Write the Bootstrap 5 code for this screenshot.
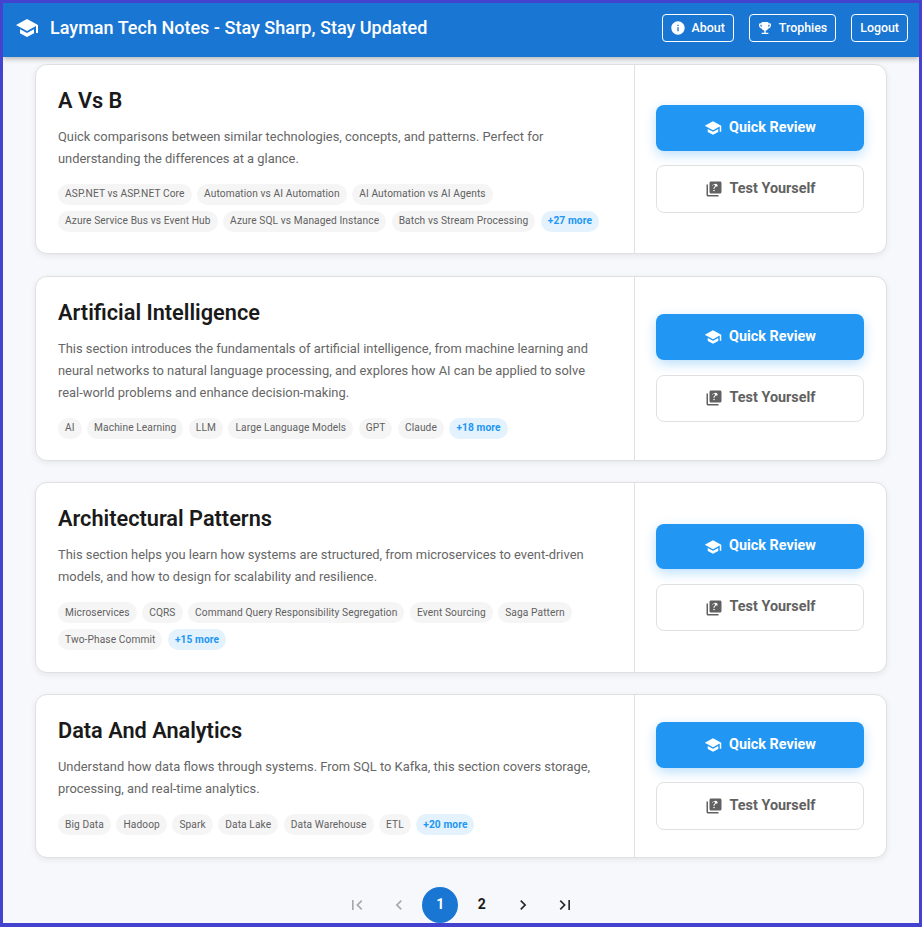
<!doctype html>
<html lang="en">
<head>
<meta charset="utf-8">
<title>Layman Tech Notes</title>
<link href="https://cdn.jsdelivr.net/npm/bootstrap@5.3.0/dist/css/bootstrap.min.css" rel="stylesheet">
<style>
html,body{height:100%;}
body{font-family:Roboto,"Liberation Sans",sans-serif;background:#f5f7fa;margin:0;overflow:hidden;}
.frame{height:927px;border:3px solid #4343cf;border-bottom-width:4px;display:flex;flex-direction:column;overflow:hidden;background:#f7f8fb;}
.topbar{height:54px;flex:none;background:#1976d2;color:#fff;padding:0 11px 4px 12px;box-shadow:0 2px 5px rgba(0,0,0,.28);position:relative;z-index:2;flex-wrap:nowrap;}
.brand-ic{width:24px;height:24px;fill:#fff;margin-right:11px;}
.brand-tx{font-size:18.05px;font-weight:500;color:#fff;line-height:1;}
.top-btn{font-size:12.4px;font-weight:500;color:#fff;border:1px solid #fff;border-radius:4px;height:28px;padding:0 8px;line-height:1;background:transparent;display:inline-flex;align-items:center;}
.top-btn:hover{color:#fff;}
.top-btn-ic{padding:0 8px 0 7px;}
.top-btn svg{width:16px;height:16px;fill:#fff;margin:0 6px 0 0;}
.top-gap{gap:15px;}
.page-main{padding:6.8px 32px 0;flex:1;}
.topic{border:1px solid #e0e0e0;border-radius:12px;box-shadow:0 2px 6px rgba(0,0,0,.07);margin-bottom:21.4px;flex-direction:row;background:#fff;overflow:hidden;}
.topic-body{flex:1;min-width:0;padding:21px 22px 21.4px;}
.topic-side{width:252px;flex:none;border-left:1px solid #e0e0e0;padding:0 22px 0 21px;gap:14.6px;}
.topic-title{font-size:21.72px;font-weight:600;color:#1a1a1a;line-height:30px;margin:0 0 10px;}
.topic-desc{font-size:12.9px;line-height:22px;color:#666;margin:0 0 14px;}
.chips{gap:6px 5.5px;}
.chip{font-size:10.18px;font-weight:400;color:#616161;background:#f5f5f5;border-radius:11px;height:21px;padding:0 7px;display:inline-flex;align-items:center;line-height:1;letter-spacing:.1px;}
.chip-more{color:#2196f3;background:#e3f2fd;font-weight:700;}
.act{font-size:14.4px;font-weight:700;border-radius:8px;display:flex;align-items:center;justify-content:center;line-height:1;width:100%;}
.act svg{width:18px;height:18px;margin-right:7px;}
.act-main{height:45.6px;background:#2196f3;border:0;color:#fff;box-shadow:0 4px 12px rgba(33,150,243,.3);}
.act-main:hover{background:#2196f3;color:#fff;}
.act-main svg{fill:#fff;}
.act-alt{height:47.4px;background:#fff;border:1px solid #e0e0e0;color:#616161;}
.act-alt:hover{background:#fff;color:#616161;}
.act-alt svg{fill:#616161;}
.pager{gap:5.5px;margin-top:29.4px;}
.pg{width:36px;height:36px;border-radius:50%;display:flex;align-items:center;justify-content:center;font-size:14px;font-weight:700;color:#1a1a1a;text-decoration:none;}
.pg svg{width:20px;height:20px;fill:#2b2b2b;}
.pg-off svg{fill:#a8a8a8;}
.pg-on{background:#1976d2;color:#fff;}
</style>
</head>
<body>
<svg width="0" height="0" class="d-none">
<symbol id="i-school" viewBox="0 0 24 24"><path d="M5 13.18v4L12 21l7-3.82v-4L12 17l-7-3.82zM12 3 1 9l11 6 9-4.91V17h2V9L12 3z"/></symbol>
<symbol id="i-info" viewBox="0 0 24 24"><path d="M12 2C6.48 2 2 6.48 2 12s4.48 10 10 10 10-4.48 10-10S17.52 2 12 2zm1 15h-2v-6h2v6zm0-8h-2V7h2v2z"/></symbol>
<symbol id="i-trophy" viewBox="0 0 24 24"><path d="M19 5h-2V3H7v2H5c-1.1 0-2 .9-2 2v1c0 2.55 1.92 4.63 4.39 4.94.63 1.5 1.98 2.63 3.61 2.96V19H7v2h10v-2h-4v-3.1c1.63-.33 2.98-1.46 3.61-2.96C19.08 12.63 21 10.55 21 8V7c0-1.1-.9-2-2-2zM5 8V7h2v3.82C5.84 10.4 5 9.3 5 8zm14 0c0 1.3-.84 2.4-2 2.82V7h2v1z"/></symbol>
<symbol id="i-quiz" viewBox="0 0 24 24"><path d="M4 6H2v14c0 1.1.9 2 2 2h14v-2H4V6zm16-4H8c-1.1 0-2 .9-2 2v12c0 1.1.9 2 2 2h12c1.1 0 2-.9 2-2V4c0-1.1-.9-2-2-2zm-7.99 13c-.59 0-1.05-.47-1.05-1.05 0-.59.47-1.04 1.05-1.04.59 0 1.04.45 1.04 1.04-.01.58-.45 1.05-1.04 1.05zm2.5-6.17c-.63.93-1.23 1.21-1.56 1.81-.13.24-.18.4-.18 1.18h-1.52c0-.41-.06-1.08.26-1.65.41-.73 1.18-1.17 1.63-1.81.48-.68.21-1.94-1.14-1.94-.88 0-1.32.67-1.5 1.23l-1.37-.57C11.51 5.96 12.52 5 13.99 5c1.23 0 2.08.56 2.51 1.26.37.61.58 1.73.01 2.57z"/></symbol>
<symbol id="i-first" viewBox="0 0 24 24"><path d="M18.41 16.59 13.82 12l4.59-4.59L17 6l-6 6 6 6zM6 6h2v12H6z"/></symbol>
<symbol id="i-prev" viewBox="0 0 24 24"><path d="M15.41 7.41 14 6l-6 6 6 6 1.41-1.41L10.83 12z"/></symbol>
<symbol id="i-next" viewBox="0 0 24 24"><path d="M10 6 8.59 7.41 13.17 12l-4.58 4.59L10 18l6-6z"/></symbol>
<symbol id="i-last" viewBox="0 0 24 24"><path d="M5.59 7.41 10.18 12l-4.59 4.59L7 18l6-6-6-6zM16 6h2v12h-2z"/></symbol>
</svg>
<div class="frame">
<nav class="navbar topbar d-flex align-items-center justify-content-between">
  <div class="d-flex align-items-center">
    <svg class="brand-ic"><use href="#i-school"/></svg>
    <span class="brand-tx">Layman Tech Notes - Stay Sharp, Stay Updated</span>
  </div>
  <div class="d-flex align-items-center top-gap">
    <a class="btn top-btn top-btn-ic" href="#"><svg><use href="#i-info"/></svg>About</a>
    <a class="btn top-btn top-btn-ic" href="#"><svg><use href="#i-trophy"/></svg>Trophies</a>
    <a class="btn top-btn" href="#">Logout</a>
  </div>
</nav>
<main class="page-main">
  <section class="card topic">
    <div class="topic-body">
      <h2 class="topic-title">A Vs B</h2>
      <p class="topic-desc">Quick comparisons between similar technologies, concepts, and patterns. Perfect for understanding the differences at a glance.</p>
      <div class="d-flex flex-wrap chips">
        <span class="chip">ASP.NET vs ASP.NET Core</span><span class="chip">Automation vs AI Automation</span><span class="chip">AI Automation vs AI Agents</span><span class="chip">Azure Service Bus vs Event Hub</span><span class="chip">Azure SQL vs Managed Instance</span><span class="chip">Batch vs Stream Processing</span><span class="chip chip-more">+27 more</span>
      </div>
    </div>
    <div class="topic-side d-flex flex-column justify-content-center">
      <a class="btn act act-main" href="#"><svg><use href="#i-school"/></svg>Quick Review</a>
      <a class="btn act act-alt" href="#"><svg><use href="#i-quiz"/></svg>Test Yourself</a>
    </div>
  </section>
  <section class="card topic">
    <div class="topic-body">
      <h2 class="topic-title">Artificial Intelligence</h2>
      <p class="topic-desc">This section introduces the fundamentals of artificial intelligence, from machine learning and neural networks to natural language processing, and explores how AI can be applied to solve real-world problems and enhance decision-making.</p>
      <div class="d-flex flex-wrap chips">
        <span class="chip">AI</span><span class="chip">Machine Learning</span><span class="chip">LLM</span><span class="chip">Large Language Models</span><span class="chip">GPT</span><span class="chip">Claude</span><span class="chip chip-more">+18 more</span>
      </div>
    </div>
    <div class="topic-side d-flex flex-column justify-content-center">
      <a class="btn act act-main" href="#"><svg><use href="#i-school"/></svg>Quick Review</a>
      <a class="btn act act-alt" href="#"><svg><use href="#i-quiz"/></svg>Test Yourself</a>
    </div>
  </section>
  <section class="card topic">
    <div class="topic-body">
      <h2 class="topic-title">Architectural Patterns</h2>
      <p class="topic-desc">This section helps you learn how systems are structured, from microservices to event-driven models, and how to design for scalability and resilience.</p>
      <div class="d-flex flex-wrap chips">
        <span class="chip">Microservices</span><span class="chip">CQRS</span><span class="chip">Command Query Responsibility Segregation</span><span class="chip">Event Sourcing</span><span class="chip">Saga Pattern</span><span class="chip">Two-Phase Commit</span><span class="chip chip-more">+15 more</span>
      </div>
    </div>
    <div class="topic-side d-flex flex-column justify-content-center">
      <a class="btn act act-main" href="#"><svg><use href="#i-school"/></svg>Quick Review</a>
      <a class="btn act act-alt" href="#"><svg><use href="#i-quiz"/></svg>Test Yourself</a>
    </div>
  </section>
  <section class="card topic">
    <div class="topic-body">
      <h2 class="topic-title">Data And Analytics</h2>
      <p class="topic-desc">Understand how data flows through systems. From SQL to Kafka, this section covers storage, processing, and real-time analytics.</p>
      <div class="d-flex flex-wrap chips">
        <span class="chip">Big Data</span><span class="chip">Hadoop</span><span class="chip">Spark</span><span class="chip">Data Lake</span><span class="chip">Data Warehouse</span><span class="chip">ETL</span><span class="chip chip-more">+20 more</span>
      </div>
    </div>
    <div class="topic-side d-flex flex-column justify-content-center">
      <a class="btn act act-main" href="#"><svg><use href="#i-school"/></svg>Quick Review</a>
      <a class="btn act act-alt" href="#"><svg><use href="#i-quiz"/></svg>Test Yourself</a>
    </div>
  </section>
  <nav class="d-flex justify-content-center pager">
    <a class="pg pg-off" href="#" aria-label="First"><svg><use href="#i-first"/></svg></a>
    <a class="pg pg-off" href="#" aria-label="Previous"><svg><use href="#i-prev"/></svg></a>
    <a class="pg pg-on" href="#">1</a>
    <a class="pg" href="#">2</a>
    <a class="pg" href="#" aria-label="Next"><svg><use href="#i-next"/></svg></a>
    <a class="pg" href="#" aria-label="Last"><svg><use href="#i-last"/></svg></a>
  </nav>
</main>
</div>
<script src="https://cdn.jsdelivr.net/npm/bootstrap@5.3.0/dist/js/bootstrap.bundle.min.js"></script>
</body>
</html>
